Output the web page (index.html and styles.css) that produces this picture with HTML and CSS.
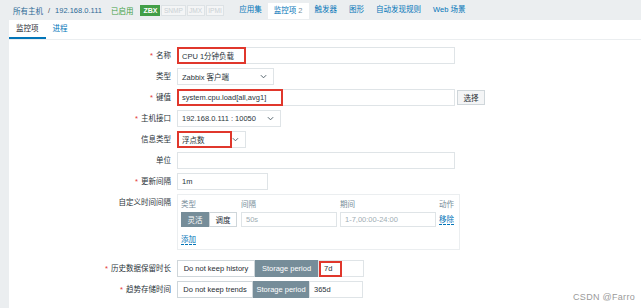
FILE: index.html
```html
<!DOCTYPE html>
<html lang="zh">
<head>
  <meta charset="UTF-8" />
  <title>监控项</title>
  <link rel="stylesheet" href="styles.css">
</head>
<body>
  <div class="topbar">
    <a class="crumb">所有主机</a><span class="sep">/</span><a class="crumb">192.168.0.111</a>
    <span class="status">已启用</span>
    <span class="badges">
      <span class="badge on">ZBX</span><span class="badge">SNMP</span><span class="badge">JMX</span><span class="badge">IPMI</span>
    </span>
    <a class="nav">应用集</a>
    <a class="nav active">监控项 <span class="count">2</span></a>
    <a class="nav">触发器</a>
    <a class="nav">图形</a>
    <a class="nav">自动发现规则</a>
    <a class="nav">Web 场景</a>
  </div>

  <div class="page">
    <div class="tabs">
      <a class="tab current">监控项</a>
      <a class="tab">进程</a>
    </div>

    <div class="form">
      <div class="label"><i>*</i>名称</div>
      <div class="field">
        <div class="input w-long"><span class="mark mark-name">CPU 1分钟负载</span></div>
      </div>

      <div class="label">类型</div>
      <div class="field">
        <div class="select w-type">Zabbix 客户端<svg class="chev" viewBox="0 0 8 5"><path d="M1 1l3 3 3-3"/></svg></div>
      </div>

      <div class="label"><i>*</i>键值</div>
      <div class="field">
        <div class="input w-long"><span class="mark mark-key">system.cpu.load[all,avg1]</span></div>
        <button class="btn">选择</button>
      </div>

      <div class="label"><i>*</i>主机接口</div>
      <div class="field">
        <div class="select w-iface">192.168.0.111 : 10050<svg class="chev" viewBox="0 0 8 5"><path d="M1 1l3 3 3-3"/></svg></div>
      </div>

      <div class="label">信息类型</div>
      <div class="field">
        <div class="select w-info"><span class="mark mark-info">浮点数</span><svg class="chev" viewBox="0 0 8 5"><path d="M1 1l3 3 3-3"/></svg></div>
      </div>

      <div class="label">单位</div>
      <div class="field">
        <div class="input w-long"></div>
      </div>

      <div class="label"><i>*</i>更新间隔</div>
      <div class="field">
        <div class="input w-delay">1m</div>
      </div>

      <div class="label label-top">自定义时间间隔</div>
      <div class="field">
        <div class="intervals">
          <div class="ih">类型</div>
          <div class="ih">间隔</div>
          <div class="ih">期间</div>
          <div class="ih">动作</div>
          <div class="toggle">
            <span class="seg seg-on">灵活</span><span class="seg">调度</span>
          </div>
          <div class="input ghost">50s</div>
          <div class="input ghost">1-7,00:00-24:00</div>
          <a class="link">移除</a>
          <a class="link add">添加</a>
        </div>
      </div>

      <div class="label gap-top"><i>*</i>历史数据保留时长</div>
      <div class="field gap-top">
        <div class="toggle">
          <span class="seg seg-hist">Do not keep history</span><span class="seg seg-on seg-sp">Storage period</span>
        </div>
        <div class="input w-keep"><span class="mark mark-hist">7d</span></div>
      </div>

      <div class="label"><i>*</i>趋势存储时间</div>
      <div class="field">
        <div class="toggle">
          <span class="seg seg-trend">Do not keep trends</span><span class="seg seg-on seg-sp2">Storage period</span>
        </div>
        <div class="input w-keep2">365d</div>
      </div>
    </div>
  </div>

  <div class="watermark">CSDN @Farro</div>
</body>
</html>
```

FILE: styles.css
```css
html, body {
  margin: 0;
  height: 100%;
  overflow: hidden;
}

body {
  background: #ebeef0;
  color: #2a343a;
  font-family: "Liberation Sans", "Noto Sans CJK SC", sans-serif;
  font-size: 7.5px;
  position: relative;
}

a {
  color: #0275b8;
  text-decoration: none;
}

/* top navigation */
.topbar {
  height: 20px;
  display: flex;
  align-items: center;
  padding-left: 13px;
}

.crumb {
  color: #2b6a96;
}

.sep {
  margin: 0 5px;
  color: #555;
}

.status {
  color: #429e47;
  margin-left: 9px;
}

.badges {
  display: flex;
  margin-left: 7px;
  margin-right: 8px;
}

.badge {
  border: 1px solid #dde2e5;
  color: #c9d0d4;
  padding: 0 1.5px;
  height: 9px;
  line-height: 9px;
  margin-right: 1px;
  background: #f4f5f6;
  font-size: 6.6px;
}

.badge.on {
  background: #429e47;
  border-color: #429e47;
  color: #fff;
  font-weight: bold;
  font-size: 7px;
  padding: 0 2px;
}

.nav {
  padding: 0 6px;
  height: 16px;
  line-height: 16px;
}

.nav.active {
  background: #fff;
  color: #0275b8;
  margin-top: 1px;
}

.nav .count {
  color: #768d99;
}

/* main page */
.page {
  margin-left: 9px;
  background: #fff;
  height: 288px;
}

.tabs {
  height: 19px;
  display: flex;
  border-bottom: 1px solid #ebeef0;
}

.tab {
  padding: 0 7px;
  line-height: 18px;
  border-bottom: 2px solid transparent;
  height: 17px;
}

.tab.current {
  color: #1f2c33;
  border-bottom-color: #0275b8;
}

/* form */
.form {
  display: grid;
  grid-template-columns: 162px auto;
  column-gap: 6px;
  row-gap: 4px;
  padding-top: 7px;
}

.label {
  text-align: right;
  line-height: 17px;
}

.label i {
  font-style: normal;
  color: #e33734;
  margin-right: 3px;
}

.label-top {
  line-height: 18px;
}

.gap-top {
  margin-top: 6px;
}

.field {
  display: flex;
  align-items: center;
  gap: 2px;
}

.input,
.select {
  box-sizing: border-box;
  height: 17px;
  border: 1px solid #dfe4e7;
  background: #fff;
  display: flex;
  align-items: center;
  padding: 0 4px;
}

.select {
  justify-content: space-between;
  padding-right: 6px;
}

.chev {
  width: 7px;
  height: 5px;
  fill: none;
  stroke: #4f5f68;
  stroke-width: 1.1;
}

.w-long { width: 278px; padding-left: 0; }
.w-type { width: 97px; }
.w-iface { width: 104px; }
.w-info { width: 69px; padding-left: 0; }
.w-delay { width: 91px; }
.w-keep { width: 46px; padding-left: 0; }
.w-keep2 { width: 54px; }

.mark {
  box-sizing: border-box;
  height: 17px;
  border: 2px solid #e0372c;
  display: flex;
  align-items: center;
  padding-left: 3px;
  margin-top: -1px;
  margin-bottom: -1px;
}

.mark-name { width: 69px; margin-left: -1px; }
.mark-key { width: 106px; margin-left: -1px; }
.mark-info { width: 56px; margin-left: -1px; }
.mark-hist { width: 23px; height: 16px; margin-left: 0; }

.btn {
  box-sizing: border-box;
  height: 15px;
  width: 28px;
  border: 1px solid #cfd6da;
  background: #f4f5f6;
  color: #1f2c33;
  font: inherit;
  padding: 0;
}

/* custom intervals */
.intervals {
  box-sizing: border-box;
  width: 283px;
  height: 56px;
  border: 1px solid #ebeef0;
  padding: 1px 3px 0 3px;
  display: grid;
  grid-template-columns: 57px 96px 96px auto;
  grid-template-rows: 15px 15px auto;
  column-gap: 3px;
  row-gap: 1px;
  align-items: center;
}

.ih {
  color: #768d99;
}

.intervals .input {
  height: 15px;
}

.ghost {
  color: #a0adb4;
}

.link {
  border-bottom: 1px dashed #0275b8;
  justify-self: start;
  line-height: 9px;
}

.add {
  grid-column: 1;
  margin-top: 3px;
}

.toggle {
  display: flex;
}

.seg {
  box-sizing: border-box;
  height: 15px;
  border: 1px solid #cfd6da;
  background: #fff;
  color: #1f2c33;
  display: flex;
  align-items: center;
  justify-content: center;
  width: 28px;
}

.seg-on {
  background: #768d99;
  border-color: #768d99;
  color: #fff;
}

.field > .toggle .seg {
  height: 17px;
}

.seg-hist { width: 78px; }
.seg-sp { width: 63px; }
.seg-trend { width: 76px; }
.seg-sp2 { width: 56px; }

.field > .toggle + .input {
  margin-left: -2px;
}

.watermark {
  position: absolute;
  right: 6px;
  bottom: 6px;
  color: #9a9a9a;
  font-size: 9px;
  font-family: "Liberation Sans", sans-serif;
  letter-spacing: 0.3px;
}
```
